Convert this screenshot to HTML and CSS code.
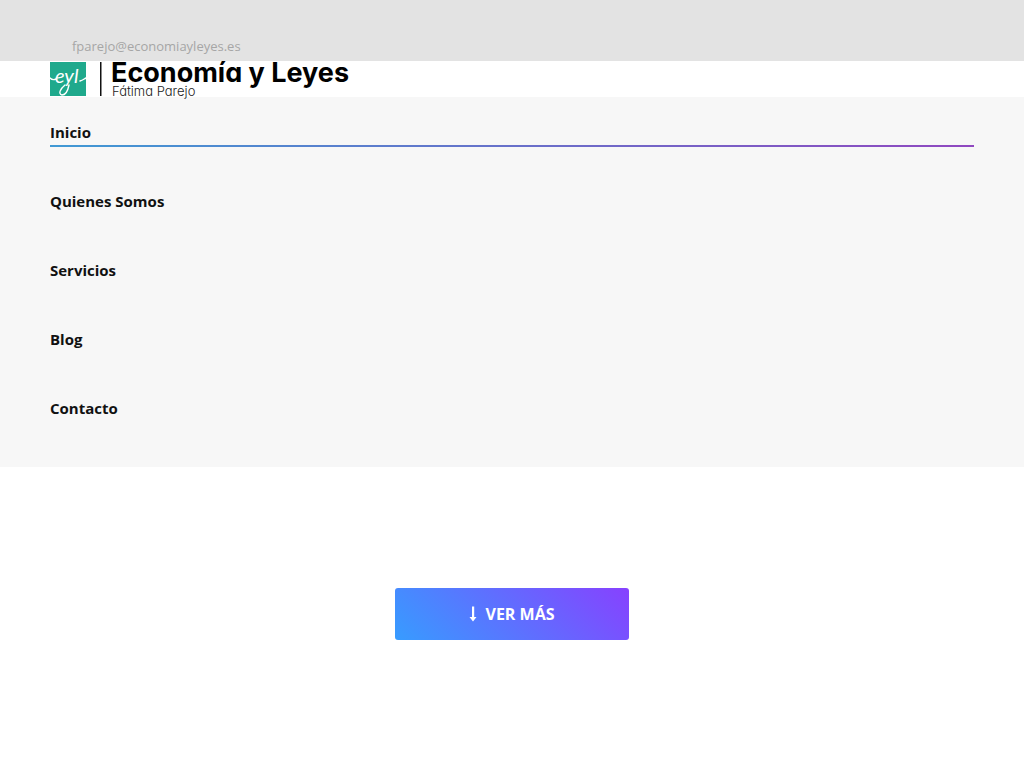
FILE: index.html
```html
<!DOCTYPE html>
<html lang="es">
<head>
<meta charset="utf-8">
<meta name="viewport" content="width=device-width, initial-scale=1">
<title>Economía y Leyes</title>
<link rel="stylesheet" href="styles.css">
</head>
<body>
<div class="topbar"><a class="topbar-mail" href="mailto:fparejo@economiayleyes.es">fparejo@economiayleyes.es</a></div>
<header class="brand">
  <a class="logo" href="#" aria-label="Economía y Leyes, Fátima Parejo">
    <svg class="logo-art" width="300" height="36" viewBox="0 0 300 36">
      <rect x="0" y="1" width="36" height="34" fill="#1fa98c"/>
      <path d="M0 17C2 19 4 19 6 18M30 20C33 19 34 18 36 17M15 24C10 28 8 33 12 34C16 34 18 29 19 24" fill="none" stroke="#fff" stroke-width="1.4" stroke-linecap="round"/>
      <text class="logo-script" x="5" y="22">eyl</text>
      <rect x="50" y="1" width="1.5" height="34" fill="#111"/>
      <text class="logo-name" x="61" y="21">Economía y Leyes</text>
      <text class="logo-person" x="62" y="35">Fátima Parejo</text>
    </svg>
  </a>
</header>
<nav class="menu">
  <ul class="menu-list">
    <li><a class="menu-link menu-link-active" href="#">Inicio</a></li>
    <li><a class="menu-link" href="#">Quienes Somos</a></li>
    <li><a class="menu-link" href="#">Servicios</a></li>
    <li><a class="menu-link" href="#">Blog</a></li>
    <li><a class="menu-link" href="#">Contacto</a></li>
  </ul>
</nav>
<main class="hero">
  <a class="more" href="#">
    <svg width="8" height="16" viewBox="0 0 8 16" aria-hidden="true"><path d="M3 0.5h2.2v10.5h2.3L4 15.5 0.5 11H3z" fill="#fff"/></svg>
    <span>VER MÁS</span>
  </a>
</main>
</body>
</html>
```

FILE: styles.css
```css
* { box-sizing: border-box; }
body {
  margin: 0;
  background: #fff;
  color: #111;
  font-family: "Open Sans", sans-serif;
}
a { color: inherit; text-decoration: none; }
.topbar {
  padding: 36px 72px 5px;
  background: #e3e3e3;
  color: #a6a6a6;
  font-size: 13px;
  line-height: 20px;
}
.topbar-mail { display: block; }
.brand { padding: 0 50px; }
.logo, .logo-art { display: block; }
.logo { width: max-content; }
.logo-art { overflow: visible; }
.logo-script {
  fill: #fff;
  font: italic 400 20px Lato, sans-serif;
}
.logo-name {
  fill: #000;
  font: 700 27px Inter, sans-serif;
  font-feature-settings: "cv11", "ss03";
}
.logo-person {
  fill: #222;
  font: 300 13px Inter, sans-serif;
  font-feature-settings: "cv11";
}
.menu {
  padding: 25px 50px 44px;
  background: #f7f7f7;
}
.menu-list {
  display: grid;
  gap: 44px;
  margin: 0;
  padding: 0;
  list-style: none;
}
.menu-link {
  display: block;
  padding-bottom: 4px;
  font-size: 15px;
  font-weight: 700;
  line-height: 21px;
}
.menu-link-active {
  background: linear-gradient(90deg, #4099d4, #9048c0) bottom / 100% 2px no-repeat;
}
.hero {
  display: flex;
  justify-content: center;
  padding: 121px 50px 128px;
}
.more {
  display: flex;
  align-items: center;
  gap: 8px;
  padding: 14px 74px;
  border-radius: 3px;
  background: linear-gradient(45deg, #379cff, #8741ff);
  color: #fff;
  font-size: 16px;
  font-weight: 700;
  line-height: 24px;
}
```
